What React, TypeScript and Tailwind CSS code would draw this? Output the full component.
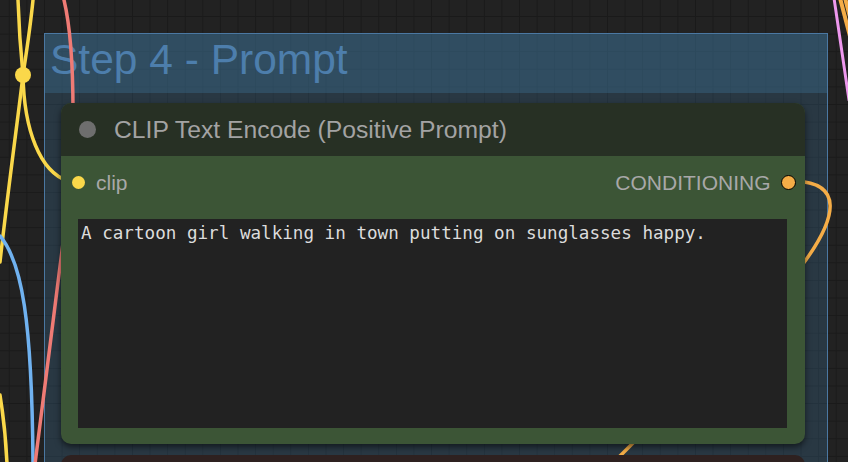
import React from 'react';

const Wires: React.FC = () => (
  <svg
    className="absolute inset-0 z-10 pointer-events-none"
    width={848}
    height={462}
    viewBox="0 0 848 462"
    fill="none"
    strokeLinecap="round"
  >
    {/* yellow clip wires + reroute dot */}
    <path d="M18 0 C19 30 21 55 23 75" stroke="#fad84a" strokeWidth={3.5} />
    <path d="M33 0 C30 30 26 55 23 75" stroke="#fad84a" strokeWidth={3.5} />
    <path d="M23 75 C19 110 8 190 0 262" stroke="#fad84a" strokeWidth={3.5} />
    <path d="M23 75 C24 130 40 172 68 181" stroke="#fad84a" strokeWidth={3.5} />
    <path d="M0 395 C4 420 6 440 7 464" stroke="#fad84a" strokeWidth={3.5} />
    <circle cx={23} cy={75} r={8} fill="#fad84a" />

    {/* blue */}
    <path d="M0 236 C22 262 32 320 33 464" stroke="#70b2f0" strokeWidth={3.5} />

    {/* red */}
    <path d="M64 0 C70 25 73 60 73 112" stroke="#ef7b75" strokeWidth={3.5} />
    <path d="M64 235 L35 464" stroke="#ef7b75" strokeWidth={3.5} />

    {/* orange conditioning */}
    <path d="M795 181 C842 183 840 215 800 268" stroke="#f5ad47" strokeWidth={3.5} />
    <path d="M640 436 L610 466" stroke="#f5ad47" strokeWidth={3.5} />

    {/* top right */}
    <path d="M840 -2 L852 44" stroke="#f5ad47" strokeWidth={4} />
    <path d="M845 -2 L856 40" stroke="#f5ad47" strokeWidth={4} />
    <path d="M834 -2 L849 100" stroke="#ee98ee" strokeWidth={3} />
  </svg>
);

const PromptNode: React.FC = () => (
  <div className="relative z-20 w-[744px] h-[341px] rounded-[10px] bg-[#3c5536] flex flex-col shadow-[0_3px_6px_rgba(0,0,0,0.55)]">
    <div className="h-[53px] rounded-t-[10px] bg-[#273024] flex items-center pl-[18px] gap-[18px]">
      <div className="w-[17px] h-[17px] rounded-full bg-[#6e6e6e]" />
      <span className="text-[24.7px] text-[#a3a3a3] leading-none pt-[2px]">
        CLIP Text Encode (Positive Prompt)
      </span>
    </div>

    <div className="mt-[14px] h-[24px] flex items-center justify-between pl-[10.5px] pr-[9.5px]">
      <div className="flex items-center gap-[11.5px]">
        <div className="w-[13px] h-[13px] rounded-full bg-[#fad84a]" />
        <span className="text-[21px] text-[#a8a8a8] leading-none">clip</span>
      </div>
      <div className="flex items-center gap-[10px]">
        <span className="text-[21px] text-[#a8a8a8] leading-none">CONDITIONING</span>
        <div className="w-[15px] h-[15px] rounded-full bg-[#f5ad47] border border-black" />
      </div>
    </div>

    <div className="mt-[25px] mb-[16px] ml-[17px] mr-[18px] flex-1 bg-[#222222] pl-[3px] pt-[3.5px] font-['DejaVu_Sans_Mono',monospace] text-[17.6px] leading-[20.5px] text-[#dcdcdc]">
      A cartoon girl walking in town putting on sunglasses happy.
    </div>
  </div>
);

export default function App() {
  return (
    <div className="relative w-[848px] h-[462px] overflow-hidden bg-[#222222] bg-[linear-gradient(#1a1a1a_1px,transparent_1px),linear-gradient(90deg,#1a1a1a_1px,transparent_1px)] bg-[size:17.6px_17.6px] bg-[position:8.8px_16px] font-['Liberation_Sans',Arial,sans-serif]">
      <div className="absolute left-[44px] top-[33px] w-[784px] h-[460px] border border-[#4b78a2] bg-[rgba(63,120,158,0.27)] flex flex-col">
        <div className="h-[59px] shrink-0 bg-[rgba(63,120,158,0.33)] pl-[5px] pt-[5px]">
          <span className="text-[42.5px] leading-none text-[#4d7eac]">Step 4 - Prompt</span>
        </div>
        <div className="pl-[16px] pt-[10px] flex flex-col gap-[11px]">
          <PromptNode />
          <div className="relative z-20 w-[744px] h-[60px] rounded-t-[10px] bg-[#2e2120]" />
        </div>
      </div>
      <Wires />
    </div>
  );
}
